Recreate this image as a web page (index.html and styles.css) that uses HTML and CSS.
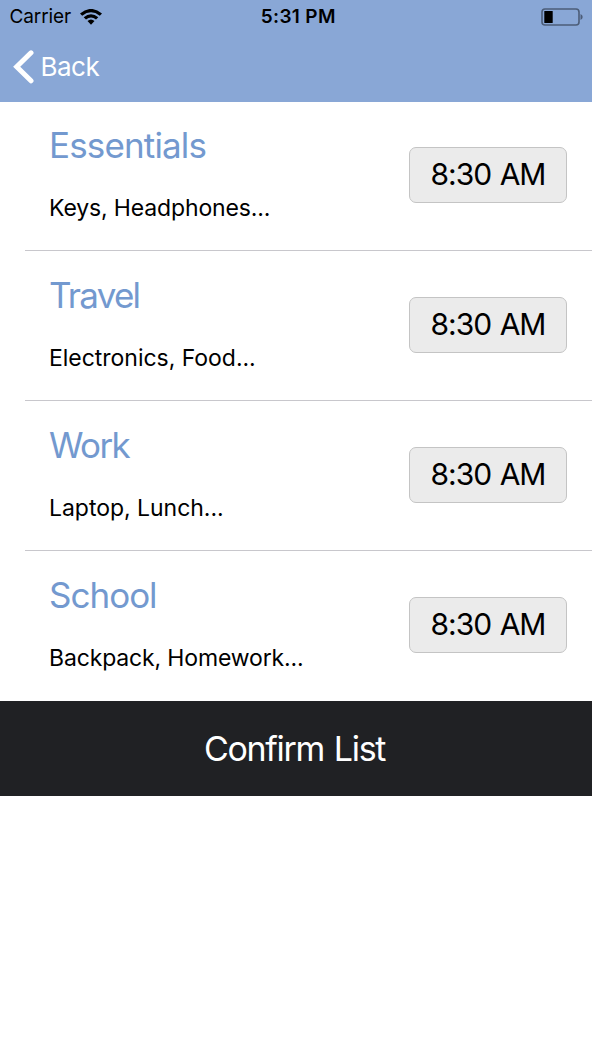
FILE: index.html
```html
<!DOCTYPE html>
<html lang="en">
<head>
<meta charset="utf-8">
<title>Lists</title>
<link rel="stylesheet" href="styles.css">
</head>
<body>
<header class="header">
  <div class="status">
    <div class="carrier"><span class="carrier-name">Carrier</span>
      <svg class="wifi" width="22" height="16" viewBox="0 0 22 16"><path d="M0 4.4Q11-4.6 22 4.4L19.8 6.7Q11-.1 2.2 6.7ZM3.7 8.2Q11 2.1 18.3 8.2L16 10.5Q11 6.5 6 10.5ZM7.5 12.1Q11 9.1 14.5 12.1L11 15.7Z"/></svg>
    </div>
    <span class="clock">5:31 PM</span>
    <svg class="battery" width="42" height="18" viewBox="0 0 42 18"><rect x="1" y="1" width="37" height="16" rx="3" fill="none" stroke="#4c5d78" stroke-width="1.6"/><rect x="3.3" y="3" width="8.4" height="12" rx=".6"/><path d="M39.5 6Q41.7 7 41.7 9T39.5 12Z" fill="#4c5d78"/></svg>
  </div>
  <nav class="nav">
    <svg class="chevron" width="21" height="34" viewBox="0 0 21 34"><path d="M18 2.8L3.7 16.7L18 30.8"/></svg>
    <span class="back">Back</span>
  </nav>
</header>
<main>
  <section class="row"><div class="info"><h2 class="title essentials">Essentials</h2><p class="items keys">Keys, Headphones...</p></div><button class="time">8:30 AM</button></section>
  <section class="row"><div class="info"><h2 class="title travel">Travel</h2><p class="items">Electronics, Food...</p></div><button class="time">8:30 AM</button></section>
  <section class="row"><div class="info"><h2 class="title work">Work</h2><p class="items">Laptop, Lunch...</p></div><button class="time">8:30 AM</button></section>
  <section class="row"><div class="info"><h2 class="title school">School</h2><p class="items backpack">Backpack, Homework...</p></div><button class="time">8:30 AM</button></section>
</main>
<button class="confirm">Confirm List</button>
</body>
</html>
```

FILE: styles.css
```css
* { box-sizing: border-box; }
body { margin: 0; background: #fff; color: #000; font-family: Inter, sans-serif; }
h2, p { margin: 0; font-weight: 400; }
button { font: inherit; padding: 0; }
.header { height: 101.5px; background: #89a7d6; }
.status { height: 33px; padding: 0 9px 0 9.5px; display: grid; grid-template-columns: 1fr auto 1fr; align-items: center; }
.carrier { display: flex; align-items: center; gap: 9px; font-size: 19px; letter-spacing: -.1px; }
.battery { justify-self: end; }
.clock { font-size: 19px; font-weight: 600; letter-spacing: .35px; padding-left: 4px; }
.nav { height: 67px; padding-left: 13px; display: flex; align-items: center; gap: 6.5px; color: #fff; }
.chevron { fill: none; stroke: #fff; stroke-width: 5; stroke-linecap: round; }
.back { font-size: 26px; letter-spacing: -.5px; }
main { margin-top: -.5px; }
.row { height: 150px; margin-left: 25px; padding: 0 25px 0 24px; display: flex; justify-content: space-between; border-bottom: 1px solid #c8c7cc; }
.row:last-child { border-bottom: 0; }
.title { margin-top: 22px; line-height: 44px; font-size: 35px; color: #7399cf; white-space: nowrap; }
.essentials { letter-spacing: -.85px; }
.travel { letter-spacing: -1.75px; }
.work { letter-spacing: -1.6px; }
.school { letter-spacing: -1px; }
.items { margin-top: 26px; line-height: 30px; font-size: 23px; white-space: nowrap; letter-spacing: -.03px; }
.keys { letter-spacing: -.14px; }
.backpack { letter-spacing: -.15px; }
.time { width: 158px; height: 56px; margin-top: 46px; padding-bottom: 2px; background: #ebebeb; border: 1px solid #c4c4c4; border-radius: 7px; font-size: 30px; letter-spacing: -1px; word-spacing: 1px; color: #000; }
.confirm { display: block; width: 100%; height: 95px; padding: 0 3px 0 0; border: 0; background: #202124; color: #fff; font-size: 34px; letter-spacing: -1.3px; word-spacing: 1.5px; }
```
